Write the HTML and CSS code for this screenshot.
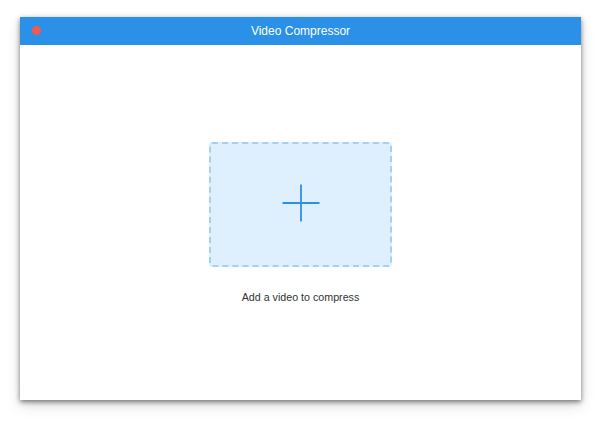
FILE: index.html
```html
<!DOCTYPE html>
<html lang="en">
<head>
    <meta charset="UTF-8">
    <meta name="viewport" content="width=device-width, initial-scale=1.0">
    <title>Video Compressor</title>
    <link rel="stylesheet" href="styles.css">
</head>
<body>
    <div class="window">
        <div class="titlebar">
            <span class="close-dot"></span>
            <span class="title">Video Compressor</span>
        </div>
        <div class="content">
            <div class="drop-zone">
                <svg class="plus" width="38" height="38" viewBox="0 0 38 38">
                    <path d="M19 0.5 V37.5 M0.5 19 H37.5" stroke="#2f8fe6" stroke-width="1.8" fill="none"/>
                </svg>
            </div>
            <p class="hint">Add a video to compress</p>
        </div>
    </div>
</body>
</html>
```

FILE: styles.css
```css
body {
    font-family: "Liberation Sans", Arial, sans-serif;
    background-color: #fff;
    margin: 0;
    padding: 17px 20px 23px 20px;
    box-sizing: border-box;
    height: 423px;
}

.window {
    width: 561px;
    height: 383px;
    background-color: #fff;
    box-shadow: 0 2px 5px rgba(0, 0, 0, 0.5), 0 6px 14px rgba(0, 0, 0, 0.12);
    display: flex;
    flex-direction: column;
}

.titlebar {
    height: 28px;
    background-color: #2a90e8;
    position: relative;
    display: flex;
    align-items: center;
    justify-content: center;
}

.close-dot {
    position: absolute;
    left: 12px;
    top: 9px;
    width: 9px;
    height: 9px;
    border-radius: 50%;
    background-color: #f5584e;
}

.title {
    color: #fff;
    font-size: 12px;
}

.content {
    flex: 1;
    display: flex;
    flex-direction: column;
    align-items: center;
    padding-top: 97px;
}

.drop-zone {
    width: 179px;
    height: 121px;
    background-color: #def0fd;
    border: 2px dashed #a3d0f3;
    border-radius: 3px;
    display: flex;
    align-items: center;
    justify-content: center;
}

.plus {
    margin-bottom: 4px;
}

.hint {
    margin: 24px 0 0 0;
    font-size: 10.7px;
    color: #333;
}
```
